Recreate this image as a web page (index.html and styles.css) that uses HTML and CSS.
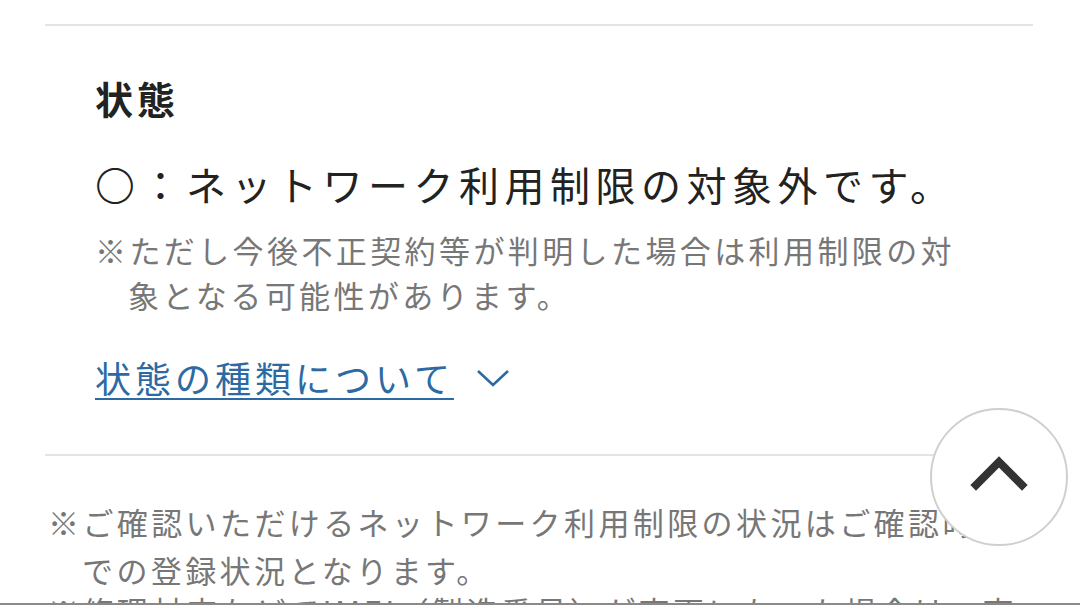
FILE: index.html
```html
<!DOCTYPE html>
<html lang="ja">
<head>
<meta charset="utf-8">
<link rel="stylesheet" href="styles.css">
</head>
<body>
<div class="wrap">
  <section class="status">
    <h2 class="heading">状態</h2>
    <p class="result"><span class="mark">〇</span>：ネットワーク利用制限の対象外です。</p>
    <p class="note">※ただし今後不正契約等が判明した場合は利用制限の対象となる可能性があります。</p>
    <p class="more"><a class="more-link" href="#">状態の種類について</a><svg class="chev-down" width="34" height="20" viewBox="0 0 34 20"><path d="M2 3 L17 17 L32 3" fill="none" stroke="#2d6aa3" stroke-width="2.6"/></svg></p>
  </section>
  <div class="notes">
    <p class="foot">※ご確認いただけるネットワーク利用制限の状況はご確認時点での登録状況となります。</p>
    <p class="foot foot-next">※修理対応などでIMEI（製造番号）が変更になった場合は、変更前のIMEIでの確認はできません。</p>
  </div>
</div>
<button class="to-top" aria-label="ページトップへ"><svg width="60" height="40" viewBox="0 0 60 40"><path d="M7 32 L30 9 L53 32" fill="none" stroke="#333" stroke-width="8" stroke-linecap="square"/></svg></button>
<div class="bottom-bar"></div>
</body>
</html>
```
FILE: styles.css
```css
html, body {
  margin: 0;
  padding: 0;
  background: #fff;
  overflow: hidden;
}
body {
  font-family: "Noto Sans CJK JP", "Noto Sans", sans-serif;
  color: #222;
  height: 608px;
}
.wrap {
  padding: 24px 47px 0 45px;
}
.status {
  border-top: 2px solid #e4e4e4;
  border-bottom: 2px solid #e4e4e4;
  padding: 0 50px 50px;
}
.heading {
  margin: 44px 0 0;
  font-size: 38px;
  line-height: 56px;
  font-weight: 700;
  letter-spacing: 4px;
}
.result {
  margin: 28px 0 0;
  font-size: 40px;
  line-height: 60px;
  letter-spacing: 5.5px;
  white-space: nowrap;
}
.mark {
  font-weight: 200;
}
.note {
  margin: 13px 0 0;
  font-size: 31px;
  line-height: 45px;
  letter-spacing: 3.4px;
  color: #777;
  padding-left: 33px;
  text-indent: -33px;
  width: 860px;
}
.more {
  margin: 33px 0 0;
  font-size: 36px;
  line-height: 54px;
  letter-spacing: 4px;
  display: flex;
  align-items: center;
}
.more-link {
  color: #2d6aa3;
  text-decoration: underline;
  text-decoration-thickness: 2px;
  text-underline-offset: 5px;
}
.chev-down {
  margin-left: 22px;
  margin-top: 2px;
}
.notes {
  margin-top: 42px;
  padding-left: 3px;
}
.foot {
  margin: 0;
  font-size: 31px;
  line-height: 48px;
  letter-spacing: 3.4px;
  color: #777;
  padding-left: 34px;
  text-indent: -34px;
}
.foot-next {
  margin-top: -7px;
}
.to-top {
  position: fixed;
  left: 930px;
  top: 408px;
  width: 138px;
  height: 138px;
  border-radius: 50%;
  border: 2px solid #cfcfcf;
  background: #fff;
  padding: 0;
  display: flex;
  align-items: center;
  justify-content: center;
}
.to-top svg {
  margin-top: -8px;
}
.bottom-bar {
  position: fixed;
  left: 0;
  right: 0;
  bottom: 0;
  height: 3px;
  background: #fff;
  border-top: 2px solid #8a8a8a;
}
```
